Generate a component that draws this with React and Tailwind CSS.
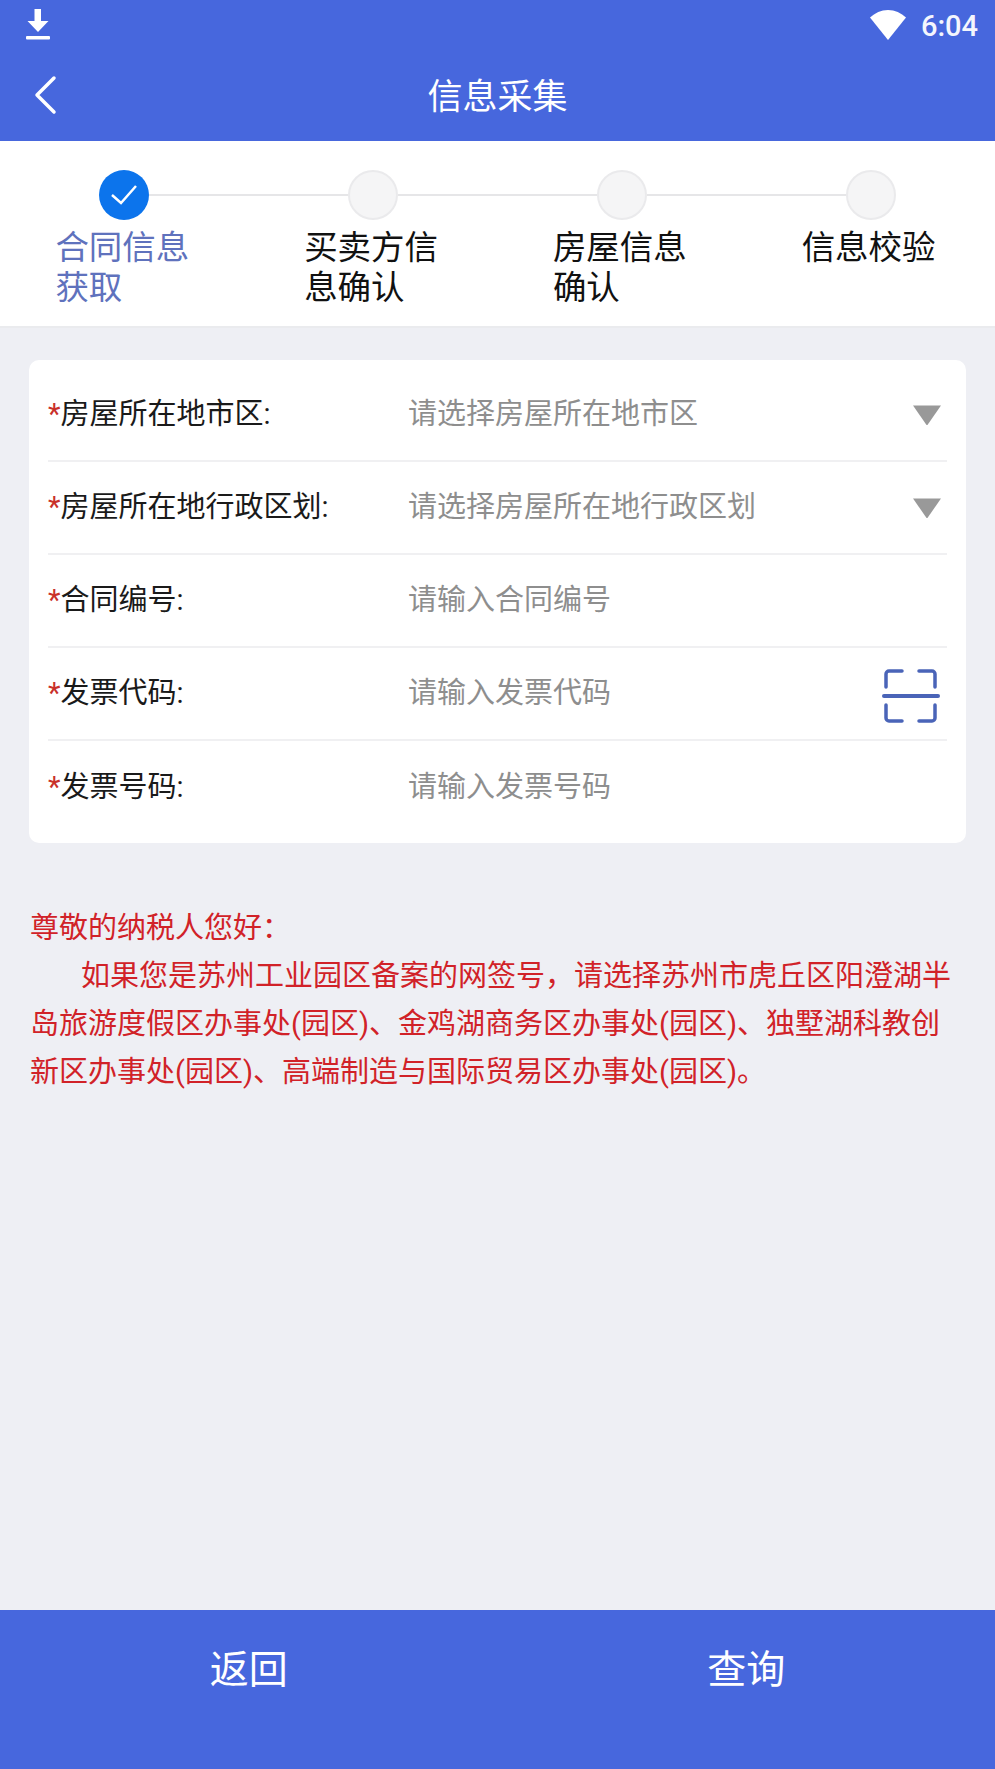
import React from 'react';

const steps = [
  { label: '合同信息获取', done: true },
  { label: '买卖方信息确认' },
  { label: '房屋信息确认' },
  { label: '信息校验' },
];

const fields = [
  { label: '房屋所在地市区:', hint: '请选择房屋所在地市区', icon: 'caret' },
  { label: '房屋所在地行政区划:', hint: '请选择房屋所在地行政区划', icon: 'caret' },
  { label: '合同编号:', hint: '请输入合同编号' },
  { label: '发票代码:', hint: '请输入发票代码', icon: 'scan' },
  { label: '发票号码:', hint: '请输入发票号码' },
];

const Caret = () => (
  <svg width="30" height="22" viewBox="0 0 30 22" className="mr-[5px]">
    <path d="M1 1.500h28L15.800 20.500a1 1 0 0 1-1.600 0z" fill="#999999" />
  </svg>
);

const Scan = () => (
  <svg width="58" height="58" viewBox="0 0 58 58" fill="none" stroke="#4a64b8" strokeLinecap="round" strokeLinejoin="round" className="mr-[7px] mt-[4px]">
    <path d="M20 4H7a3 3 0 0 0-3 3v13" strokeWidth="3.500" />
    <path d="M37 4h13a3 3 0 0 1 3 3v13" strokeWidth="3.500" />
    <path d="M2 29h54" strokeWidth="4" />
    <path d="M4 38v13a3 3 0 0 0 3 3h13" strokeWidth="3.500" />
    <path d="M53 38v13a3 3 0 0 1-3 3H37" strokeWidth="3.500" />
  </svg>
);

const App = () => {
  return (
    <div className="w-[995px] h-[1769px] flex flex-col bg-[#eeeff4] font-['Roboto','Noto_Sans_CJK_SC',sans-serif]">
      {/* Header */}
      <header className="h-[141px] shrink-0 bg-[#4767dd] text-white flex flex-col">
        <div className="h-[50px] flex items-center justify-between pl-[26px] pr-[17px]">
          <svg width="24" height="32" viewBox="0 0 24 32" fill="white">
            <path d="M8.500 0h6.500v12h7.500L12 23 1.500 12h7z" />
            <rect x="0" y="27" width="24" height="3.500" rx="1" />
          </svg>
          <div className="flex items-center gap-[15px]">
            <svg width="36" height="30" viewBox="0 0 36 30" fill="white">
              <path d="M0 7.500C5 3 11 0 18 0s13 3 18 7.500L18 30z" />
            </svg>
            <span className="text-[29px] leading-[32px] font-medium text-[#f4f6fd] pt-[2px]">6:04</span>
          </div>
        </div>
        <div className="relative h-[91px] flex items-center justify-center pt-[5px]">
          <svg width="26" height="40" viewBox="0 0 26 40" fill="none" stroke="white" strokeWidth="3.500" strokeLinecap="round" strokeLinejoin="round" className="absolute left-[33px] top-[25px]">
            <path d="M21 3 4 20l17 17" />
          </svg>
          <span className="text-[35px] leading-[44px]">信息采集</span>
        </div>
      </header>

      {/* Stepper */}
      <section className="h-[187px] shrink-0 bg-white border-b-2 border-[#eaebee] pt-[29px]">
        <div className="flex items-center px-[99px]">
          {steps.map((s, i) => (
            <React.Fragment key={s.label}>
              {s.done ? (
                <div className="w-[50px] h-[50px] rounded-full bg-[#0c74ec] flex items-center justify-center shrink-0">
                  <svg width="28" height="22" viewBox="0 0 28 22" fill="none" stroke="white" strokeWidth="2.500">
                    <path d="M2 11l9 8L26 2" />
                  </svg>
                </div>
              ) : (
                <div className="w-[50px] h-[50px] rounded-full bg-[#f5f5f6] border-2 border-[#eaeaec] shrink-0" />
              )}
              {i < steps.length - 1 && <div className="flex-1 h-[2px] bg-[#e6e6e8]" />}
            </React.Fragment>
          ))}
        </div>
        <div className="grid grid-cols-4 mt-[8px]">
          {steps.map((s) => (
            <div
              key={s.label}
              className={`w-[138px] mx-auto text-[33.500px] leading-[40px] ${s.done ? 'text-[#5f72bd]' : 'text-[#111111]'}`}
            >
              {s.label}
            </div>
          ))}
        </div>
      </section>

      {/* Form */}
      <section className="mx-[29px] mt-[32px] h-[483px] shrink-0 bg-white rounded-[10px] px-[19px] pt-[9px]">
        {fields.map((f, i) => (
          <div
            key={f.label}
            className={`flex items-center h-[93px] ${i < fields.length - 1 ? 'border-b-2 border-[#f0f0f2]' : ''}`}
          >
            <div className="w-[360px] shrink-0 text-[29px] text-[#1a1a1a] whitespace-nowrap">
              <span className="text-[#c9302a]">*</span>
              {f.label}
            </div>
            <div className="flex-1 text-[29px] text-[#8e8e8e] whitespace-nowrap">{f.hint}</div>
            {f.icon === 'caret' && <Caret />}
            {f.icon === 'scan' && <Scan />}
          </div>
        ))}
      </section>

      {/* Notice */}
      <section className="px-[30px] mt-[61px] text-[29px] leading-[48px] text-[#d12228]">
        <p>尊敬的纳税人您好：</p>
        <p className="indent-[51px]">
          如果您是苏州工业园区备案的网签号，请选择苏州市虎丘区阳澄湖半岛旅游度假区办事处(园区)、金鸡湖商务区办事处(园区)、独墅湖科教创新区办事处(园区)、高端制造与国际贸易区办事处(园区)。
        </p>
      </section>

      {/* Bottom bar */}
      <footer className="mt-auto h-[159px] shrink-0 bg-[#4767dd] text-white grid grid-cols-2 text-[39px]">
        <button className="pb-[38px]">返回</button>
        <button className="pb-[38px]">查询</button>
      </footer>
    </div>
  );
};

export default App;
